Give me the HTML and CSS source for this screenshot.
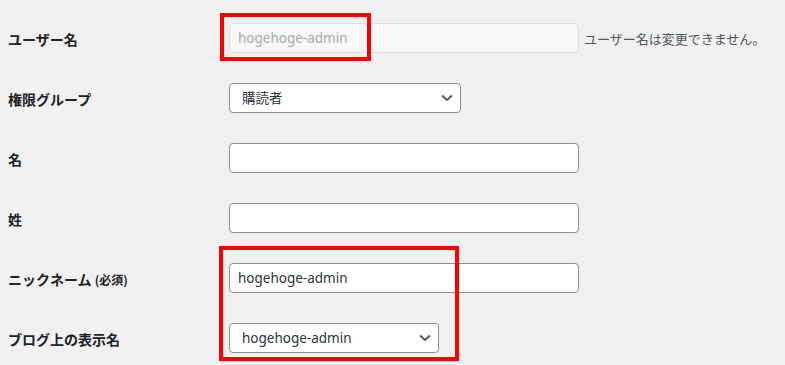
FILE: index.html
```html
<!DOCTYPE html>
<html lang="ja">
<head>
<meta charset="utf-8">
<title>プロフィール</title>
<link rel="stylesheet" href="styles.css">
</head>
<body>
<div class="form">
  <div class="row">
    <label class="label" for="user_login">ユーザー名</label>
    <div class="field">
      <input id="user_login" class="text text-disabled" type="text" value="hogehoge-admin" disabled>
      <span class="desc">ユーザー名は変更できません。</span>
    </div>
  </div>
  <div class="row">
    <label class="label" for="role">権限グループ</label>
    <div class="field">
      <span class="select-wrap select-role">
        <select id="role" class="select"><option>購読者</option></select>
        <svg class="chev" width="12" height="8" viewBox="0 0 12 8"><path d="M1 1.5 L6 6 L11 1.5" fill="none" stroke="#50575e" stroke-width="2"/></svg>
      </span>
    </div>
  </div>
  <div class="row">
    <label class="label" for="first_name">名</label>
    <div class="field"><input id="first_name" class="text" type="text" value=""></div>
  </div>
  <div class="row">
    <label class="label" for="last_name">姓</label>
    <div class="field"><input id="last_name" class="text" type="text" value=""></div>
  </div>
  <div class="row">
    <label class="label" for="nickname">ニックネーム <span class="req">(必須)</span></label>
    <div class="field"><input id="nickname" class="text" type="text" value="hogehoge-admin"></div>
  </div>
  <div class="row">
    <label class="label" for="display_name">ブログ上の表示名</label>
    <div class="field">
      <span class="select-wrap select-display">
        <select id="display_name" class="select"><option>hogehoge-admin</option></select>
        <svg class="chev" width="12" height="8" viewBox="0 0 12 8"><path d="M1 1.5 L6 6 L11 1.5" fill="none" stroke="#50575e" stroke-width="2"/></svg>
      </span>
    </div>
  </div>
  <div class="mark mark-user"></div>
  <div class="mark mark-nick"></div>
</div>
</body>
</html>
```

FILE: styles.css
```css
html, body {
  margin: 0;
  padding: 0;
  background: #f0f0f1;
}
body {
  font-family: "Noto Sans", "Noto Sans CJK JP", sans-serif;
  color: #1d2327;
  font-size: 14px;
}
.form {
  position: relative;
  padding: 8px 0 0 8px;
}
.row {
  display: grid;
  grid-template-columns: 221px 1fr;
  height: 60px;
}
.label {
  padding-top: 21px;
  line-height: 20px;
  font-weight: 700;
  font-size: 14px;
  font-family: "Noto Sans CJK JP", sans-serif;
  color: #1d2327;
}
.req {
  font-size: 12px;
}
.field {
  padding-top: 15px;
  display: flex;
  align-items: center;
  gap: 5px;
  height: 30px;
}
.text {
  box-sizing: border-box;
  width: 350px;
  height: 30px;
  margin: 0;
  padding: 0 8px;
  border: 1px solid #8c8f94;
  border-radius: 4px;
  background: #fff;
  color: #2c3338;
  font-family: "Noto Sans", "Noto Sans CJK JP", sans-serif;
  font-size: 13.5px;
  outline: none;
}
.text-disabled {
  background: #f6f7f7;
  border-color: #dcdcde;
  color: #a7aaad;
}
.desc {
  font-size: 13px;
  color: #50575e;
  font-family: "Noto Sans CJK JP", sans-serif;
}
.select-wrap {
  position: relative;
  display: inline-block;
  height: 30px;
}
.select-role { width: 232px; }
.select-display { width: 210px; }
.select {
  -webkit-appearance: none;
  appearance: none;
  box-sizing: border-box;
  width: 100%;
  height: 30px;
  margin: 0;
  padding: 0 24px 0 12px;
  border: 1px solid #8c8f94;
  border-radius: 4px;
  background: #fff;
  color: #2c3338;
  font-family: "Noto Sans", "Noto Sans CJK JP", sans-serif;
  font-size: 13.5px;
}
.chev {
  position: absolute;
  right: 8px;
  top: 11px;
  pointer-events: none;
}
.mark {
  position: absolute;
  box-sizing: border-box;
  border: 4px solid #ff0000;
}
.mark-user {
  left: 220px;
  top: 13px;
  width: 151px;
  height: 48px;
}
.mark-nick {
  left: 219px;
  top: 246px;
  width: 240px;
  height: 115px;
}
```
